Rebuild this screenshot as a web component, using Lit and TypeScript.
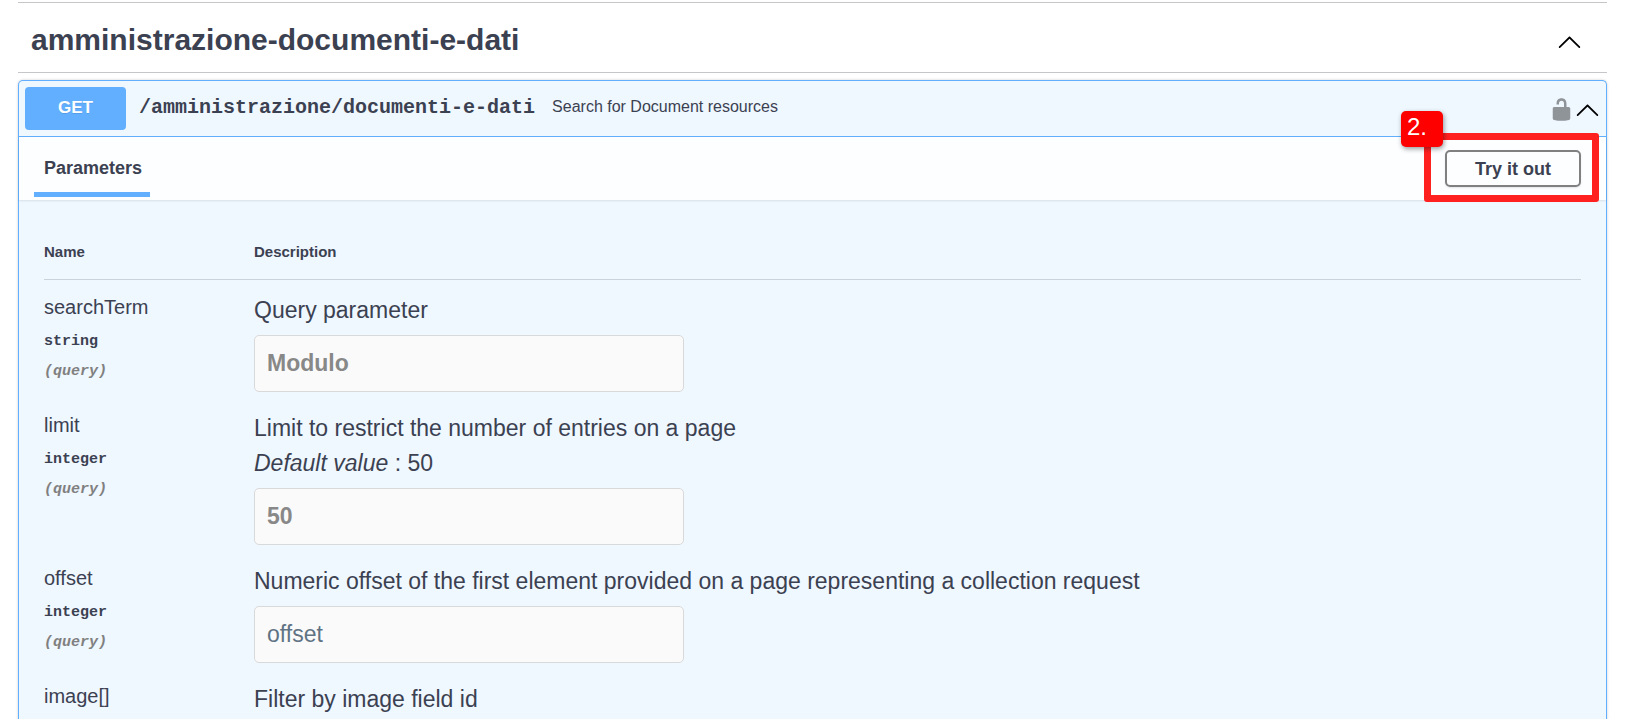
import { LitElement, html, css, nothing } from "lit";
import { customElement, property } from "lit/decorators.js";

interface Param {
  name: string;
  type?: string;
  place?: string;
  description: string;
  defaultValue?: string;
  value?: string;
  placeholder?: string;
}

const PARAMS: Param[] = [
  { name: "searchTerm", type: "string", place: "(query)", description: "Query parameter", value: "Modulo", placeholder: "searchTerm" },
  {
    name: "limit",
    type: "integer",
    place: "(query)",
    description: "Limit to restrict the number of entries on a page",
    defaultValue: "50",
    value: "50",
    placeholder: "limit",
  },
  {
    name: "offset",
    type: "integer",
    place: "(query)",
    description: "Numeric offset of the first element provided on a page representing a collection request",
    placeholder: "offset",
  },
  { name: "image[]", description: "Filter by image field id" },
];

const chevron = html`<svg class="icon" viewBox="0 0 20 20" width="25" height="25" aria-hidden="true">
  <path
    d="M17.418 14.908C17.69 15.176 18.127 15.176 18.397 14.908C18.667 14.64 18.668 14.207 18.397 13.939L10.489 6.109C10.219 5.841 9.782 5.841 9.51 6.109L1.602 13.939C1.332 14.207 1.332 14.64 1.602 14.908C1.873 15.176 2.311 15.176 2.581 14.908L10 7.767L17.418 14.908Z"
  />
</svg>`;

const openLock = html`<svg class="icon" viewBox="0 0 20 20" width="25" height="25" aria-hidden="true">
  <path
    d="M15.8 8H14V5.6C14 2.703 12.665 1 10 1 7.334 1 6 2.703 6 5.6V6h2v-.801C8 3.754 8.797 3 10 3c1.203 0 2 .754 2 2.199V8H4c-.553 0-1 .646-1 1.199V17c0 .549.428 1.139.951 1.307l1.197.387C5.672 18.861 6.55 19 7.1 19h5.8c.549 0 1.428-.139 1.951-.307l1.196-.387c.524-.167.953-.757.953-1.306V9.199C17 8.646 16.352 8 15.8 8z"
  />
</svg>`;

@customElement("params-table")
class ParamsTable extends LitElement {
  @property({ attribute: false }) params: Param[] = [];

  static styles = css`
    :host {
      display: block;
      padding: 25px;
    }
    .table {
      width: 100%;
      border-collapse: separate;
      border-spacing: 0;
    }
    .head {
      padding: 15px 0;
      border-bottom: 1px solid rgba(59, 65, 81, 0.2);
      font-size: 15px;
      line-height: 24px;
      font-weight: 700;
      text-align: left;
      vertical-align: top;
    }
    .head-name {
      width: 210px;
    }
    .cell {
      padding: 12px 0 6px;
      vertical-align: top;
    }
    .cell-text {
      padding-top: 13px;
    }
    .name {
      display: block;
      font-size: 20px;
      line-height: 30px;
    }
    .type,
    .place {
      font-family: "Liberation Mono", monospace;
      font-size: 15px;
      line-height: 30px;
      font-weight: 700;
    }
    .type {
      margin-top: 5px;
    }
    .place {
      color: #808080;
      font-style: italic;
    }
    .text {
      margin: 0;
      font-size: 23px;
      line-height: 35px;
    }
    .input {
      display: block;
      box-sizing: border-box;
      width: 100%;
      max-width: 430px;
      height: 57px;
      margin-top: 7px;
      padding: 0 12px;
      border: 1px solid #d9d9d9;
      border-radius: 5px;
      background: #fafafa;
      color: #888;
      font: 700 23px "Liberation Sans", Arial, sans-serif;
    }
    .input::placeholder {
      color: #5f7384;
      font-weight: 400;
      opacity: 1;
    }
  `;

  render() {
    return html`<table class="table">
      <thead>
        <tr>
          <th class="head head-name" scope="col">Name</th>
          <th class="head" scope="col">Description</th>
        </tr>
      </thead>
      <tbody>
        ${this.params.map(
          (p) => html`<tr>
            <td class="cell">
              ${p.placeholder
                ? html`<label class="name" for=${p.name}>${p.name}</label>`
                : html`<span class="name">${p.name}</span>`}
              ${p.type ? html`<div class="type">${p.type}</div>` : nothing}
              ${p.place ? html`<div class="place">${p.place}</div>` : nothing}
            </td>
            <td class="cell cell-text">
              <p class="text">${p.description}</p>
              ${p.defaultValue ? html`<p class="text"><i>Default value</i> : ${p.defaultValue}</p>` : nothing}
              ${p.placeholder
                ? html`<input
                    class="input"
                    id=${p.name}
                    type="text"
                    disabled
                    placeholder=${p.placeholder}
                    .value=${p.value ?? ""}
                  />`
                : nothing}
            </td>
          </tr>`
        )}
      </tbody>
    </table>`;
  }
}

@customElement("app-root")
class AppRoot extends LitElement {
  static styles = css`
    :host {
      display: flex;
      flex-direction: column;
      box-sizing: border-box;
      height: 100vh;
      overflow: hidden;
      padding: 2px 25px 0 18px;
      background: #fff;
      color: #3b4151;
      font-family: "Liberation Sans", Arial, sans-serif;
    }
    .icon {
      display: block;
      fill: currentColor;
    }
    .icon-button {
      display: block;
      padding: 0;
      border: 0;
      background: none;
      color: #000;
    }
    .tag {
      display: flex;
      align-items: center;
      justify-content: space-between;
      padding: 7px 25px 0 13px;
      border-top: 1px solid rgba(59, 65, 81, 0.3);
      border-bottom: 1px solid rgba(59, 65, 81, 0.3);
    }
    .tag-title {
      margin: 0;
      padding-bottom: 2px;
      font-size: 30px;
      line-height: 60px;
      font-weight: 700;
    }
    .block {
      flex: 1 0 auto;
      margin-top: 7px;
      border: 1px solid #61affe;
      border-bottom: 0;
      border-radius: 5px 5px 0 0;
      background: #eff7ff;
      box-shadow: 0 0 3px rgba(0, 0, 0, 0.19);
    }
    .summary {
      display: flex;
      align-items: center;
      padding: 6px;
      border-bottom: 1px solid #61affe;
    }
    .method {
      width: 101px;
      border-radius: 4px;
      background: #61affe;
      color: #fff;
      font-size: 17px;
      line-height: 42px;
      padding-bottom: 1px;
      font-weight: 700;
      text-align: center;
      text-shadow: 0 1px 0 rgba(0, 0, 0, 0.1);
    }
    .path {
      padding: 0 17px 1px 13px;
      font-family: "Liberation Mono", monospace;
      font-size: 20px;
      line-height: 42px;
      font-weight: 700;
    }
    .about {
      flex: 1;
      font-size: 16px;
      line-height: 40px;
      padding-bottom: 3px;
    }
    .summary .icon-button {
      padding-top: 2px;
    }
    .lock {
      margin-right: 1px;
      color: #8f9499;
    }
    .section {
      display: flex;
      align-items: center;
      justify-content: space-between;
      padding: 0 25px 0 15px;
      background: rgba(255, 255, 255, 0.8);
      box-shadow: 0 1px 2px rgba(0, 0, 0, 0.1);
    }
    .tab {
      margin: 0 0 3px;
      padding: 7px 8px 0 10px;
      border-bottom: 5px solid #61affe;
      font-size: 18px;
      line-height: 48px;
      font-weight: 700;
    }
    .action {
      position: relative;
    }
    .try {
      display: block;
      padding: 1px 28px 0;
      border: 2px solid #808080;
      border-radius: 5px;
      background: transparent;
      box-shadow: 0 1px 2px rgba(0, 0, 0, 0.1);
      color: #3b4151;
      font: 700 18px/32px "Liberation Sans", Arial, sans-serif;
    }
    .frame {
      position: absolute;
      inset: -17px -18px -15px -21px;
      border: 7px solid #ff2020;
      border-radius: 3px;
      pointer-events: none;
    }
    .step {
      position: absolute;
      top: -39px;
      left: -44px;
      box-sizing: border-box;
      width: 42px;
      height: 36px;
      padding-left: 6px;
      border-radius: 5px;
      background: #f00;
      box-shadow: 1px 2px 5px rgba(0, 0, 0, 0.4);
      color: #fff;
      font-size: 24px;
      line-height: 32px;
    }
  `;

  render() {
    return html`
      <header class="tag">
        <h3 class="tag-title">amministrazione-documenti-e-dati</h3>
        <button class="icon-button" aria-label="Collapse section">${chevron}</button>
      </header>
      <section class="block">
        <div class="summary">
          <span class="method">GET</span>
          <span class="path">/amministrazione/documenti-e-dati</span>
          <span class="about">Search for Document resources</span>
          <button class="icon-button lock" aria-label="Authorize">${openLock}</button>
          <button class="icon-button" aria-label="Collapse operation">${chevron}</button>
        </div>
        <div class="section">
          <h4 class="tab">Parameters</h4>
          <div class="action">
            <button class="try">Try it out</button>
            <span class="frame"></span>
            <span class="step">2.</span>
          </div>
        </div>
        <params-table .params=${PARAMS}></params-table>
      </section>
    `;
  }
}
